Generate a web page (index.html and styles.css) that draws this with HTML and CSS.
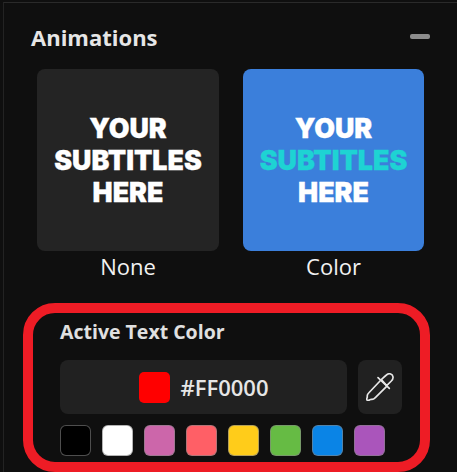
FILE: index.html

```html
<!DOCTYPE html>
<html>
<head>
  <meta http-equiv="CONTENT-TYPE" content="text/html; charset=UTF-8">
  <title>Animations</title>
  <link rel="stylesheet" href="styles.css">
</head>
<body>
  <div class="panel">
    <div class="panel-head">
      <h2>Animations</h2>
      <span class="collapse"></span>
    </div>
    <div class="anim-list">
      <div class="anim">
        <div class="preview">
          <p>YOUR<br>SUBTITLES<br>HERE</p>
        </div>
        <span class="anim-name">None</span>
      </div>
      <div class="anim">
        <div class="preview active">
          <p>YOUR<br><em>SUBTITLES</em><br>HERE</p>
        </div>
        <span class="anim-name">Color</span>
      </div>
    </div>
    <div class="color-section">
      <h3>Active Text Color</h3>
      <div class="color-row">
        <div class="color-input">
          <span class="color-chip"></span>
          <span class="color-value">#FF0000</span>
        </div>
        <button class="picker">
          <svg width="28" height="28" viewBox="0 0 84 84" fill="none" stroke="#e8e8e8" stroke-width="5" stroke-linejoin="round" stroke-linecap="round">
            <path d="M46 20 L62 38 L76 24 C84 16 82 6 74 3 C66 0 60 6 46 20 Z"/>
            <path d="M36 14 L70 46"/>
            <path d="M42 24 L8 60 C4 64 3 68 4 72 L2 78 C2 82 6 84 10 81 L16 79 C20 80 24 78 28 74 L62 40"/>
          </svg>
        </button>
      </div>
      <div class="swatches">
        <span class="swatch black"></span>
        <span class="swatch white"></span>
        <span class="swatch pink"></span>
        <span class="swatch coral"></span>
        <span class="swatch yellow"></span>
        <span class="swatch green"></span>
        <span class="swatch blue"></span>
        <span class="swatch purple"></span>
      </div>
    </div>
    <div class="highlight"></div>
  </div>
</body>
</html>
```

FILE: styles.css

```css
* {
  padding: 0;
  margin: 0;
  box-sizing: border-box;
}

body {
  width: 457px;
  height: 472px;
  overflow: hidden;
  background-color: #0f0f0f;
  font-family: "Open Sans", sans-serif;
}

.panel {
  position: relative;
  height: 472px;
  margin-left: 3px;
  padding-top: 2px;
  border-left: 1px solid #232323;
  border-top: 1px solid #2a2a2a;
  margin-top: 2px;
}

.panel-head {
  display: flex;
  justify-content: space-between;
  align-items: center;
  padding: 17px 27px 0 27px;
  height: 46px;
}

.panel-head h2 {
  font-size: 22px;
  font-weight: 700;
  color: #e6e6e6;
}

.collapse {
  width: 20px;
  height: 5px;
  border-radius: 2px;
  background-color: #8c8c8c;
}

.anim-list {
  display: flex;
  gap: 24px;
  margin-top: 18px;
  padding-left: 33px;
}

.anim {
  display: flex;
  flex-direction: column;
  align-items: center;
}

.preview {
  display: flex;
  align-items: center;
  justify-content: center;
  width: 182px;
  height: 182px;
  border-radius: 8px;
  background-color: #242424;
}

.preview.active {
  width: 181px;
  background-color: #3b7fdb;
}

.preview p {
  font-family: Inter, sans-serif;
  font-size: 26.8px;
  font-weight: 900;
  line-height: 32px;
  text-align: center;
  color: #fff;
  -webkit-text-stroke: 0.3px currentColor;
}

.preview em {
  font-style: normal;
  color: #1ed3d3;
}

.anim-name {
  margin-top: 1px;
  font-size: 22px;
  line-height: 28px;
  color: #f2f2f2;
}

.color-section {
  margin-top: 40px;
  padding-left: 56px;
}

.color-section h3 {
  font-size: 19.5px;
  font-weight: 700;
  line-height: 24px;
  color: #e0e0e0;
}

.color-row {
  display: flex;
  gap: 11px;
  margin-top: 16px;
}

.color-input {
  display: flex;
  align-items: center;
  justify-content: center;
  gap: 11px;
  width: 287px;
  height: 54px;
  border-radius: 8px;
  background-color: #212121;
}

.color-chip {
  width: 31px;
  height: 31px;
  border-radius: 5px;
  background-color: #ff0000;
}

.color-value {
  font-size: 22px;
  font-weight: 600;
  color: #e6e6e6;
}

.picker {
  display: flex;
  align-items: center;
  justify-content: center;
  width: 44px;
  height: 54px;
  border: none;
  border-radius: 8px;
  background-color: #212121;
}

.swatches {
  display: flex;
  gap: 11px;
  margin-top: 11px;
}

.swatch {
  width: 31px;
  height: 31px;
  border-radius: 6px;
  border: 1px solid rgba(130, 130, 130, 0.6);
}

.black { background-color: #000; }
.white { background-color: #fff; }
.pink { background-color: #cc66aa; }
.coral { background-color: #ff5f66; }
.yellow { background-color: #ffcc1a; }
.green { background-color: #66bb44; }
.blue { background-color: #0a84e6; }
.purple { background-color: #aa55bb; }

.highlight {
  position: absolute;
  left: 19px;
  top: 300px;
  width: 407px;
  height: 169px;
  border: 10px solid #ee1c25;
  border-radius: 32px;
}
```
